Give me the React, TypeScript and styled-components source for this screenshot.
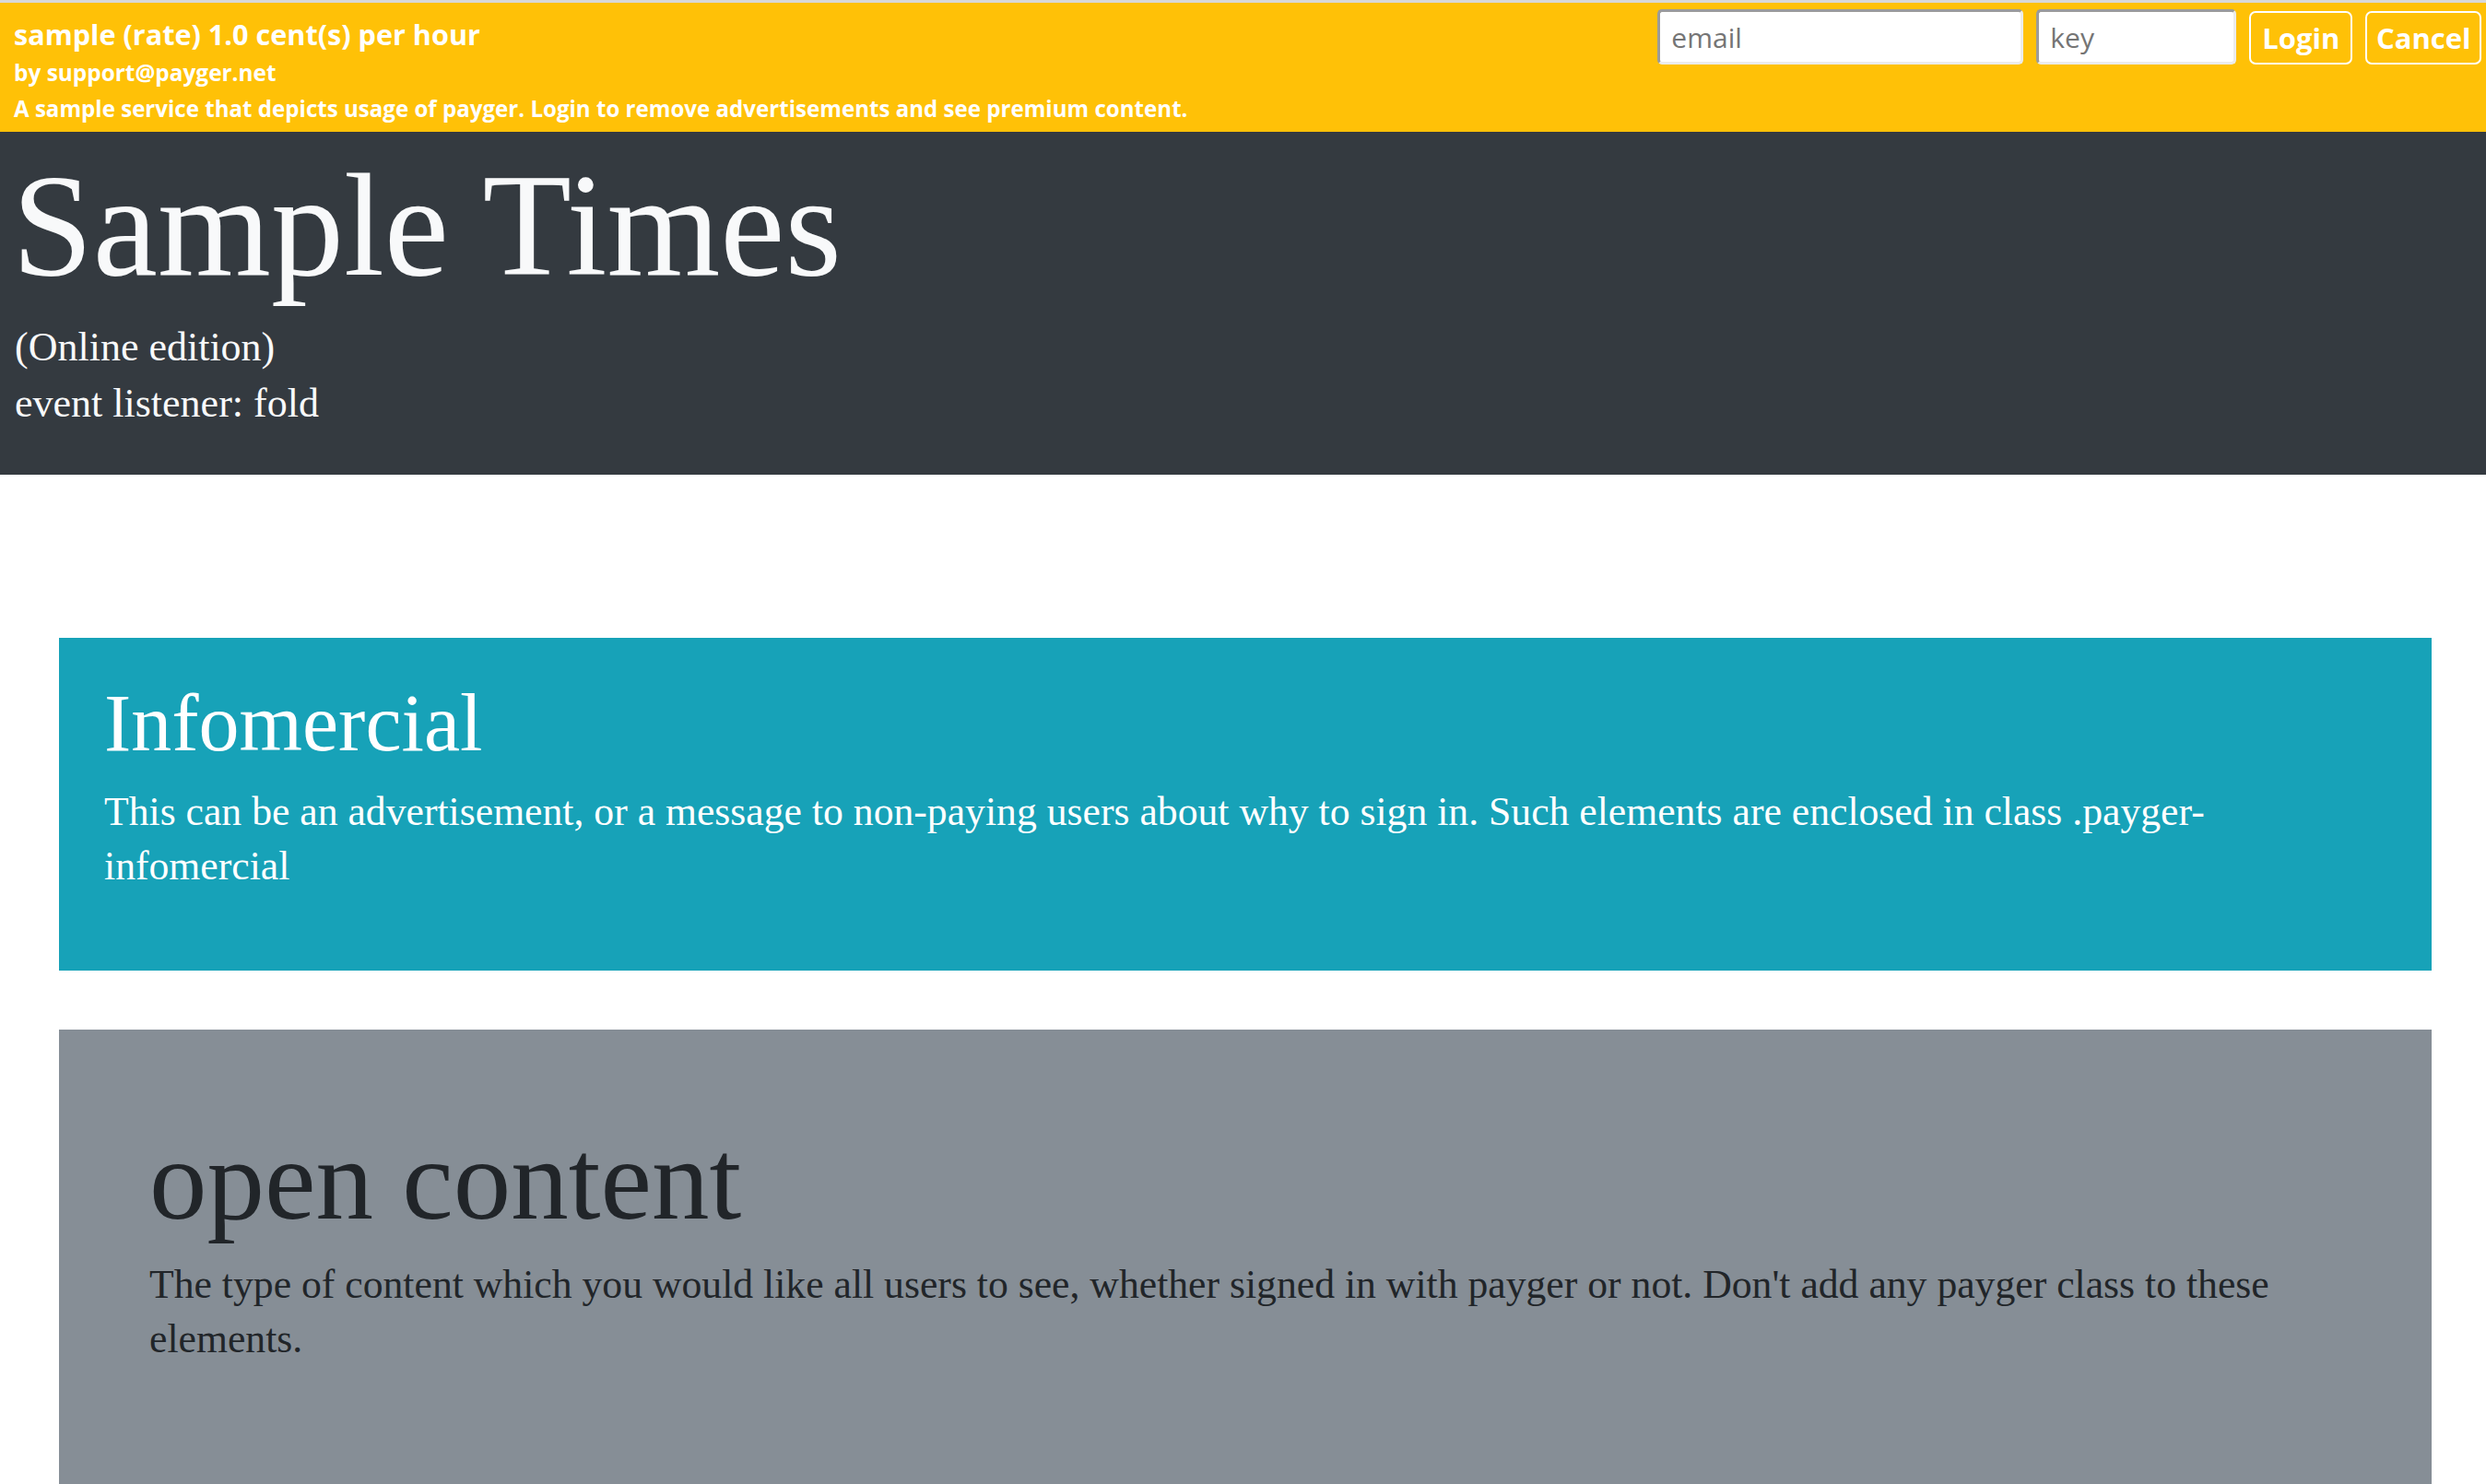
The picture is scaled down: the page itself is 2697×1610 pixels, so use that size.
import styled, { createGlobalStyle } from 'styled-components';

const GlobalStyle = createGlobalStyle`
  html, body {
    margin: 0;
    padding: 0;
    background: #fff;
  }
  body {
    font-family: "Liberation Serif", "Times New Roman", serif;
  }
  * {
    box-sizing: border-box;
  }
`;

const ServiceBar = styled.header`
  display: flex;
  justify-content: space-between;
  align-items: flex-start;
  height: 143px;
  padding: 0 5px 0 15px;
  border-top: 3px solid #d8d8d8;
  background: #ffc107;
  color: #fff;
  font-family: "Open Sans", "Noto Sans", sans-serif;
  font-weight: 700;
`;

const ServiceInfo = styled.div`
  padding-top: 14px;
`;

const InfoLine = styled.div<{ $size: number; $lift?: number }>`
  font-size: ${(p) => p.$size}px;
  line-height: 40px;
  margin-top: ${(p) => p.$lift ?? 0}px;
  white-space: nowrap;
`;

const LoginForm = styled.form`
  display: flex;
  align-items: flex-end;
  gap: 14px;
  padding-top: 7px;
`;

const Field = styled.input<{ $width: number }>`
  width: ${(p) => p.$width}px;
  height: 60px;
  padding: 0 12px;
  border: 3px solid;
  border-color: #9b9b9b #ececec #ececec #9b9b9b;
  border-radius: 5px;
  background: #fff;
  color: #495057;
  font-family: "Open Sans", "Noto Sans", sans-serif;
  font-size: 30px;
  font-weight: 400;
  outline: none;

  &::placeholder {
    color: #757575;
  }
`;

const BarButton = styled.button<{ $pad: number }>`
  height: 58px;
  padding: 0 ${(p) => p.$pad}px;
  border: 2px solid #fff;
  border-radius: 7px;
  background: transparent;
  color: #fff;
  font-family: "Open Sans", "Noto Sans", sans-serif;
  font-size: 31px;
  font-weight: 700;
  line-height: 1;
  cursor: pointer;
`;

const Masthead = styled.div`
  background: #343a40;
  color: #f8f9fa;
  padding: 24px 15px 47px 16px;
`;

const Title = styled.h1`
  margin: 0 0 24px -3px;
  font-size: 158px;
  line-height: 155px;
  font-weight: 400;
`;

const Edition = styled.p`
  margin: 0;
  font-size: 44px;
  line-height: 61px;
`;

const Main = styled.main`
  display: flex;
  flex-direction: column;
  gap: 64px;
  padding: 177px 59px 0 64px;
`;

const tones = {
  info: { bg: '#17a2b8', fg: '#fff', pad: '40px 49px 84px' },
  open: { bg: '#868e96', fg: '#212529', pad: '88px 98px 200px' },
};

const Panel = styled.section<{ $tone: keyof typeof tones }>`
  background: ${(p) => tones[p.$tone].bg};
  color: ${(p) => tones[p.$tone].fg};
  padding: ${(p) => tones[p.$tone].pad};
`;

const PanelTitle = styled.h2<{ $size: number; $after: number }>`
  margin: 0 0 ${(p) => p.$after}px;
  font-size: ${(p) => p.$size}px;
  line-height: 1.2;
  font-weight: 400;
`;

const PanelText = styled.p<{ $max?: number }>`
  margin: 0;
  max-width: ${(p) => (p.$max ? `${p.$max}px` : 'none')};
  font-size: 43.7px;
  line-height: 59px;
`;

export default function App() {
  return (
    <>
      <GlobalStyle />
      <ServiceBar>
        <ServiceInfo>
          <InfoLine $size={30.6}>sample (rate) 1.0 cent(s) per hour</InfoLine>
          <InfoLine $size={24.4} $lift={2}>by support@payger.net</InfoLine>
          <InfoLine $size={24.1} $lift={-1}>
            A sample service that depicts usage of payger. Login to remove advertisements and see premium content.
          </InfoLine>
        </ServiceInfo>
        <LoginForm onSubmit={(e) => e.preventDefault()}>
          <Field $width={397} type="email" placeholder="email" />
          <Field $width={217} type="password" placeholder="key" />
          <BarButton $pad={12} type="submit">Login</BarButton>
          <BarButton $pad={9.5} type="button">Cancel</BarButton>
        </LoginForm>
      </ServiceBar>

      <Masthead>
        <Title>Sample Times</Title>
        <Edition>(Online edition)</Edition>
        <Edition>event listener: fold</Edition>
      </Masthead>

      <Main>
        <Panel $tone="info">
          <PanelTitle $size={88} $after={13}>Infomercial</PanelTitle>
          <PanelText $max={2400}>
            This can be an advertisement, or a message to non-paying users about why to sign in. Such elements are enclosed in class .payger-infomercial
          </PanelText>
        </Panel>
        <Panel $tone="open">
          <PanelTitle $size={125} $after={9}>open content</PanelTitle>
          <PanelText>
            The type of content which you would like all users to see, whether signed in with payger or not. Don't add any payger class to these elements.
          </PanelText>
        </Panel>
      </Main>
    </>
  );
}
